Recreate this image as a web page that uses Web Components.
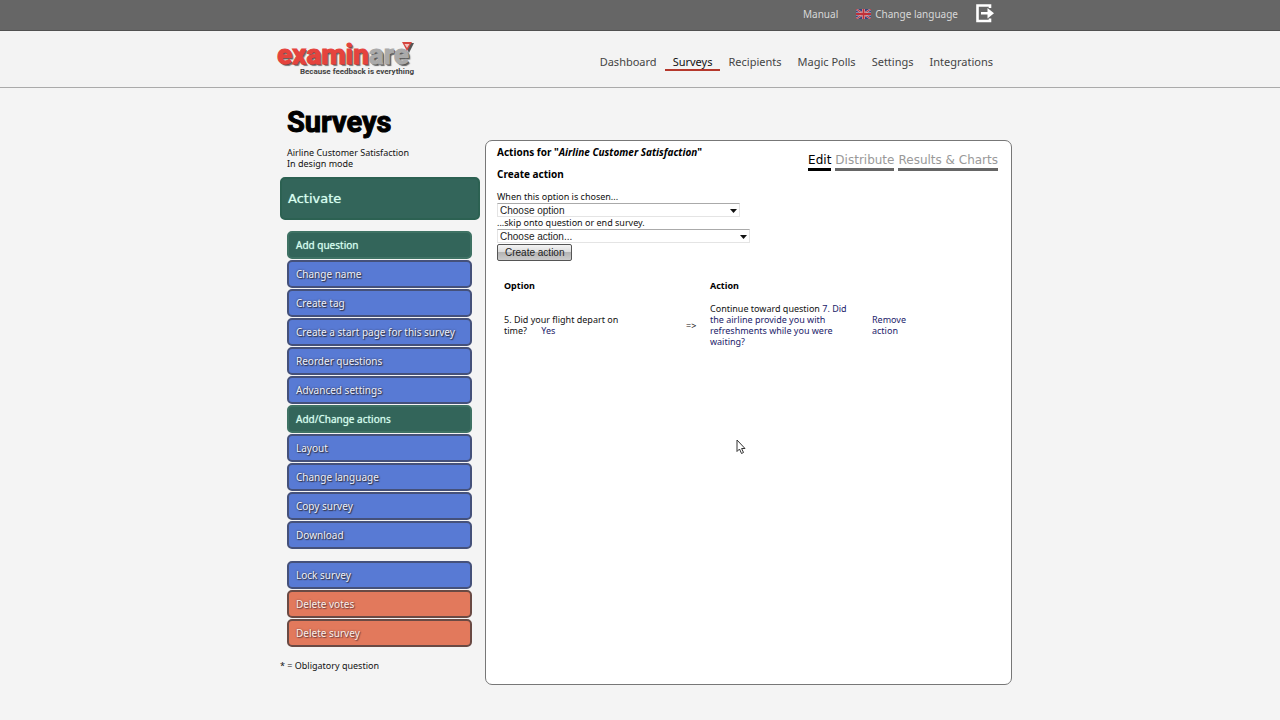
<!DOCTYPE html>
<html lang="en">
<head>
<meta charset="utf-8">
<title>Examinare - Surveys</title>
<style>
  body { margin: 0; background: #f4f4f4; color: #111; font: 9px/11px "Noto Sans", Verdana, sans-serif; }
</style>
</head>
<body>
<survey-app></survey-app>

<script>
const define = (name, html) => {
  const template = document.createElement('template');
  template.innerHTML = html;
  customElements.define(name, class extends HTMLElement {
    constructor() {
      super();
      this.attachShadow({ mode: 'open' }).append(template.content.cloneNode(true));
    }
  });
};

define('top-bar', `
<style>
  :host { display: block; background: #666; border-bottom: 1px solid #505050; }
  .row { box-sizing: border-box; max-width: 744px; height: 30px; margin: 0 auto; padding: 0 18px 3px 0; display: flex; justify-content: flex-end; align-items: center; gap: 18px; }
  a { display: flex; align-items: center; gap: 4px; color: #d8d8d8; text-decoration: none; font-size: 10px; line-height: 14px; }
  svg { display: block; }
</style>
<div class="row">
  <a href="#manual">Manual</a>
  <a href="#language">
    <svg width="15" height="10" viewBox="0 0 15 10" aria-hidden="true">
      <rect width="15" height="10" fill="#39447c"/>
      <path d="M0 0L15 10M15 0L0 10" stroke="#c8a8b0" stroke-width="2"/>
      <path d="M0 0L15 10M15 0L0 10" stroke="#b8343c" stroke-width="1"/>
      <path d="M7.500 0V10M0 5H15" stroke="#dcc4c8" stroke-width="3"/>
      <path d="M7.500 0V10M0 5H15" stroke="#c03038" stroke-width="2"/>
    </svg>
    <span>Change language</span>
  </a>
  <a href="#logout" aria-label="Log out">
    <svg width="18" height="19" viewBox="0 0 18 19" aria-hidden="true">
      <path d="M14 4V1.500H1.500V17H14V14.500" fill="none" stroke="#fff" stroke-width="2.600"/>
      <path d="M5 8H11.500V4L18 9.200L11.500 14.500V10.500H5Z" fill="#fff"/>
    </svg>
  </a>
</div>`);

define('brand-logo', `
<style>
  :host { display: block; font-family: Roboto, "Liberation Sans", sans-serif; }
  a { display: block; position: relative; color: #e5433d; text-decoration: none; }
  .name { display: block; font-size: 28px; line-height: 24px; font-weight: 700; text-shadow: 1px 1px 0 #6a4444, 2px 2px 1px #777; -webkit-text-stroke: 1px currentColor; }
  .name span { color: #aaa; text-shadow: 1px 1px 0 #555, 2px 2px 1px #666; }
  .tag { display: block; text-align: right; color: #444; font-size: 8px; line-height: 10px; font-weight: 700; position: relative; }
  svg { position: absolute; right: 0; top: -1px; }
</style>
<a href="#home">
  <span class="name">examin<span>are</span></span>
  <span class="tag">Because feedback is everything</span>
  <svg width="13" height="11" viewBox="0 0 13 11" aria-hidden="true">
    <path d="M3 1H13L8 11Z" fill="#555"/><path d="M1 0H11L6 9Z" fill="#d6453f"/><path d="M3.500 2H8.500L6 6Z" fill="#f0c4c0"/>
  </svg>
</a>`);

define('main-nav', `
<style>
  :host { display: block; }
  nav { display: flex; }
  a { padding: 0 8px; border-bottom: 2px solid transparent; color: #444; text-decoration: none; font-size: 11px; line-height: 15px; }
  a[aria-current] { color: #111; border-color: #b5382c; }
</style>
<nav aria-label="Main">
  <a href="#dashboard">Dashboard</a>
  <a href="#surveys" aria-current="page">Surveys</a>
  <a href="#recipients">Recipients</a>
  <a href="#polls">Magic Polls</a>
  <a href="#settings">Settings</a>
  <a href="#integrations">Integrations</a>
</nav>`);

define('site-header', `
<style>
  :host { display: block; background: #f3f3f3; border-bottom: 1px solid #aaa; }
  .row { box-sizing: border-box; max-width: 744px; height: 56px; margin: 0 auto; padding: 12px 11px 0 9px; display: flex; justify-content: space-between; align-items: flex-start; }
  brand-logo { width: 137px; }
  main-nav { margin-top: 11px; }
</style>
<div class="row"><brand-logo></brand-logo><main-nav></main-nav></div>`);

define('action-button', `
<style>
  :host { display: block; }
  button { box-sizing: border-box; display: block; width: 100%; height: 28px; padding: 0 7px; border: 2px solid #45517a; border-radius: 5px; background: #587ad4; color: #eef2ff; font: inherit; font-size: 10px; line-height: 14px; text-align: left; text-shadow: 0 0 2px #334, 1px 1px 1px #334; }
  :host([kind="green"]) button { background: #33655a; border-color: #3f7264; color: #d8fff0; text-shadow: 0 0 1px #a8d8c8; }
  :host([kind="red"]) button { background: #e2795c; border-color: #6a4a44; color: #fff0e8; text-shadow: 0 0 2px #744, 1px 1px 1px #744; }
  :host([size="large"]) button { height: 43px; padding: 0 6px; border-color: #2c6152; font: 13px/18px "DejaVu Sans", Verdana, sans-serif; }
</style>
<button type="button"><slot></slot></button>`);

define('survey-sidebar', `
<style>
  :host { display: block; }
  h1 { margin: 0 0 9px 7px; color: #000; font: 700 29px/32px Roboto, "Liberation Sans", sans-serif; -webkit-text-stroke: 1px #000; }
  p { margin: 0 0 0 7px; }
  .activate { margin-top: 8px; }
  .group { display: grid; gap: 1px; margin: 11px 8px 0 7px; }
  .group + .group { margin-top: 12px; }
  .note { margin: 13px 0 0; }
</style>
<h1>Surveys</h1>
<p>Airline Customer Satisfaction</p>
<p>In design mode</p>
<action-button class="activate" kind="green" size="large">Activate</action-button>
<div class="group">
  <action-button kind="green">Add question</action-button>
  <action-button>Change name</action-button>
  <action-button>Create tag</action-button>
  <action-button>Create a start page for this survey</action-button>
  <action-button>Reorder questions</action-button>
  <action-button>Advanced settings</action-button>
  <action-button kind="green">Add/Change actions</action-button>
  <action-button>Layout</action-button>
  <action-button>Change language</action-button>
  <action-button>Copy survey</action-button>
  <action-button>Download</action-button>
</div>
<div class="group">
  <action-button>Lock survey</action-button>
  <action-button kind="red">Delete votes</action-button>
  <action-button kind="red">Delete survey</action-button>
</div>
<p class="note">* = Obligatory question</p>`);

define('survey-tabs', `
<style>
  :host { display: block; }
  nav { display: flex; gap: 4px; }
  a { border-bottom: 3px solid #666; color: #999; text-decoration: none; white-space: nowrap; font: 12px/16px "DejaVu Sans", Verdana, sans-serif; }
  a[aria-current] { color: #000; border-color: #000; }
</style>
<nav aria-label="Survey">
  <a href="#edit" aria-current="page">Edit</a>
  <a href="#distribute">Distribute</a>
  <a href="#results">Results &amp; Charts</a>
</nav>`);

define('action-form', `
<style>
  :host { display: block; }
  h2 { margin: 0 0 11px; font-size: 10px; line-height: 11px; font-weight: 700; color: #000; }
  form { display: flex; flex-direction: column; align-items: flex-start; }
  label { display: block; }
  .select { position: relative; width: 253px; margin: 1px 0 0; }
  .select.option { width: 243px; }
  .select::after { content: ""; position: absolute; right: 3px; top: 6px; width: 7px; height: 4px; background: #111; clip-path: polygon(0 0, 100% 0, 50% 100%); pointer-events: none; }
  select { appearance: none; display: block; box-sizing: border-box; width: 100%; height: 14px; margin: 0; padding: 1px 2px 0; border: 1px solid #e4e4e4; border-top-color: #aaa; border-radius: 0; background: #fff; color: #222; font: 10px/12px "Liberation Sans", Arial, sans-serif; }
  button { box-sizing: border-box; height: 17px; margin-top: 1px; padding: 0 7px; border: 1px solid #555; border-radius: 2px; background: linear-gradient(#f4f4f4, #ddd 45%, #b4b4b4 50%, #ccc); color: #222; font: 10px/14px "Liberation Sans", Arial, sans-serif; }
</style>
<h2>Actions for "<em>Airline Customer Satisfaction</em>"</h2>
<h2>Create action</h2>
<form>
  <label for="option">When this option is chosen...</label>
  <div class="select option"><select id="option"><option>Choose option</option></select></div>
  <label for="target">...skip onto question or end survey.</label>
  <div class="select"><select id="target"><option>Choose action...</option></select></div>
  <button type="button">Create action</button>
</form>`);

define('action-table', `
<style>
  :host { display: block; }
  table { border-collapse: collapse; table-layout: fixed; width: 420px; max-width: 100%; }
  th { padding: 0 0 12px; text-align: left; font-weight: 700; color: #000; }
  td { padding: 0; vertical-align: middle; }
  th:nth-child(1) { width: 182px; }
  th:nth-child(2) { width: 24px; }
  th:nth-child(3) { width: 162px; }
  td:nth-child(1) { padding-right: 52px; }
  td:nth-child(3) { padding-right: 20px; }
  a { color: #22226a; text-decoration: none; }
  .answer { margin-left: 12px; }
</style>
<table>
  <thead><tr><th scope="col">Option</th><th></th><th scope="col">Action</th><th></th></tr></thead>
  <tbody><tr>
    <td>5. Did your flight depart on time? <a class="answer" href="#answer">Yes</a></td>
    <td>=&gt;</td>
    <td>Continue toward question <a href="#question7">7. Did the airline provide you with refreshments while you were waiting?</a></td>
    <td><a href="#remove">Remove action</a></td>
  </tr></tbody>
</table>`);

define('survey-panel', `
<style>
  :host { display: block; box-sizing: border-box; border: 1px solid #777; border-radius: 7px; background: #fff; padding: 6px 13px 6px 11px; }
  .top { display: flex; justify-content: space-between; align-items: flex-start; }
  survey-tabs { margin-top: 5px; }
  action-table { margin: 19px 0 0 7px; }
</style>
<div class="top"><action-form></action-form><survey-tabs></survey-tabs></div>
<action-table></action-table>`);

define('mouse-pointer', `
<style>
  :host { display: block; position: absolute; left: 736px; top: 439px; }
  svg { display: block; }
</style>
<svg width="10" height="16" viewBox="0 0 10 16" aria-hidden="true">
  <path d="M1 1V12.500L3.500 10L5.500 14.500L7.500 13.500L5.600 9.500H9Z" fill="#fff" stroke="#333"/>
</svg>`);

define('survey-app', `
<style>
  :host { display: block; }
  main { box-sizing: border-box; max-width: 744px; margin: 0 auto; padding: 18px 0 34px 12px; display: grid; grid-template-columns: 200px minmax(0, 1fr); column-gap: 5px; }
  survey-sidebar { padding-bottom: 14px; }
  survey-panel { margin-top: 34px; }
</style>
<top-bar></top-bar>
<site-header></site-header>
<main><survey-sidebar></survey-sidebar><survey-panel></survey-panel></main>
<mouse-pointer></mouse-pointer>`);
</script>
</body>
</html>
